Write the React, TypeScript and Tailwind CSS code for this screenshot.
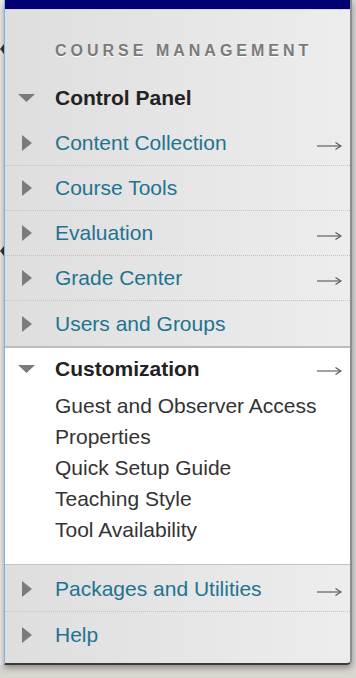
import React from 'react';

const font = { fontFamily: '"Liberation Sans", Arial, sans-serif' };

function RightTri() {
  return (
    <svg width="10" height="16" viewBox="0 0 10 16" className="block">
      <polygon points="0,0 10,8 0,16" fill="#7b7b7b" />
    </svg>
  );
}

function DownTri() {
  return (
    <svg width="17" height="8" viewBox="0 0 17 8" className="block">
      <polygon points="0,0 17,0 8.5,8" fill="#7b7b7b" />
    </svg>
  );
}

function Arrow() {
  return (
    <svg width="25" height="10" viewBox="0 0 25 10" className="block">
      <line x1="0" y1="5" x2="23" y2="5" stroke="#555" strokeWidth="1.1" />
      <path d="M18.5 1.5 L24 5 L18.5 8.5" fill="none" stroke="#555" strokeWidth="1.1" />
    </svg>
  );
}

type Item = { label: string; arrow?: boolean };

const top: Item[] = [
  { label: 'Content Collection', arrow: true },
  { label: 'Course Tools' },
  { label: 'Evaluation', arrow: true },
  { label: 'Grade Center', arrow: true },
  { label: 'Users and Groups' },
];

const subs = [
  'Guest and Observer Access',
  'Properties',
  'Quick Setup Guide',
  'Teaching Style',
  'Tool Availability',
];

function Row({ item, h, last }: { item: Item; h: string; last?: boolean }) {
  return (
    <div
      className={`flex items-center ${h} ${last ? '' : 'border-b border-dotted border-[#c2c2c2]'}`}
    >
      <div className="w-[50px] pl-[17px]">
        <RightTri />
      </div>
      <span className="flex-1 text-[21px] text-[#1f7390]">{item.label}</span>
      {item.arrow && (
        <div className="pr-[8px] pt-[6px]">
          <Arrow />
        </div>
      )}
    </div>
  );
}

export default function App() {
  return (
    <div className="relative w-[356px] h-[678px] bg-[#d8d6ce] overflow-hidden" style={font}>
      {/* left strip */}
      <div className="absolute left-0 top-0 w-[4px] h-[665px] bg-[#e9e9e9]" />
      <div className="absolute left-0 top-[44px] w-0 h-0 border-y-[5px] border-y-transparent border-r-[4px] border-r-[#333]" />
      <div className="absolute left-0 top-[246px] w-0 h-0 border-y-[5px] border-y-transparent border-r-[4px] border-r-[#333]" />
      {/* right strip */}
      <div className="absolute right-0 top-0 w-[4px] h-[665px] bg-[#d6d6d6]" />

      <div className="relative ml-[4px] w-[348px] h-[665px] flex flex-col border-l border-[#7fb1e3] border-r-2 border-r-[#8d8d8d] border-b-2 border-b-[#3a3a3a] rounded-br-[5px] bg-linear-to-r from-[#dedede] to-[#ededed] shadow-[0_3px_6px_rgba(0,0,0,0.35)]">
        <div className="h-[9px] bg-[#000070]" />
        <div className="h-[1px] bg-[#d4d4ee]" />

        <div
          className="pt-[31px] h-[51px] mb-[13px] pl-[50px] text-[16px] leading-[20px] font-bold tracking-[4px] text-[#7a7a7a]"
          style={{ textShadow: '0 1px 0 #fff' }}
        >
          COURSE MANAGEMENT
        </div>

        <div className="flex items-center h-[47px]">
          <div className="w-[50px] pl-[13px]">
            <DownTri />
          </div>
          <span className="text-[21px] font-bold text-[#222]">Control Panel</span>
        </div>

        {top.map((it, i) => (
          <Row key={it.label} item={it} h="h-[45px]" last={i === top.length - 1} />
        ))}

        <div className="bg-white border-t-2 border-[#bdbdbd] border-b border-b-dotted border-b-[#c2c2c2] pb-[19px]">
          <div className="flex items-center h-[42px]">
            <div className="w-[50px] pl-[13px]">
              <DownTri />
            </div>
            <span className="flex-1 text-[21px] font-bold text-[#222]">Customization</span>
            <div className="pr-[8px] pt-[4px]">
              <Arrow />
            </div>
          </div>
          {subs.map((s) => (
            <div key={s} className="h-[31px] leading-[31px] pl-[50px] text-[21px] text-[#333]">
              {s}
            </div>
          ))}
        </div>

        <div className="pt-[1px]">
          <Row item={{ label: 'Packages and Utilities', arrow: true }} h="h-[46px]" />
          <Row item={{ label: 'Help' }} h="h-[46px]" last />
        </div>
      </div>
    </div>
  );
}
